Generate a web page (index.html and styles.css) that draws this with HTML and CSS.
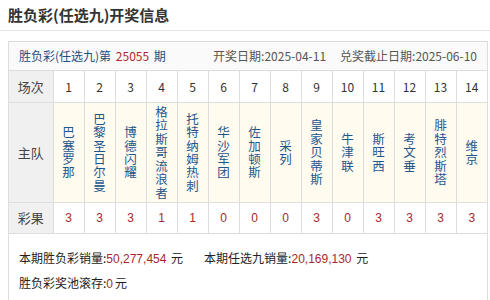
FILE: index.html
```html
<!DOCTYPE html>
<html lang="zh-CN">
<head>
<meta charset="utf-8">
<link rel="stylesheet" href="styles.css">
</head>
<body>
<div class="title">胜负彩(任选九)开奖信息</div>
<div class="box">
  <div class="box-head">
    <div class="issue">胜负彩(任选九)第 <span class="red">25055</span> 期</div>
    <div class="dates"><span>开奖日期:2025-04-11</span><span>兑奖截止日期:2025-06-10</span></div>
  </div>
  <table class="grid">
    <colgroup>
      <col class="c-label">
      <col><col><col><col><col><col><col><col><col><col><col><col><col><col>
    </colgroup>
    <tr class="r-num">
      <td class="label">场次</td>
      <td>1</td><td>2</td><td>3</td><td>4</td><td>5</td><td>6</td><td>7</td><td>8</td><td>9</td><td>10</td><td>11</td><td>12</td><td>13</td><td>14</td>
    </tr>
    <tr class="r-team">
      <td class="label">主队</td>
      <td><div class="vt">巴塞罗那</div></td>
      <td><div class="vt">巴黎圣日尔曼</div></td>
      <td><div class="vt">博德闪耀</div></td>
      <td><div class="vt">格拉斯哥流浪者</div></td>
      <td><div class="vt">托特纳姆热刺</div></td>
      <td><div class="vt">华沙军团</div></td>
      <td><div class="vt">佐加顿斯</div></td>
      <td><div class="vt">采列</div></td>
      <td><div class="vt">皇家贝蒂斯</div></td>
      <td><div class="vt">牛津联</div></td>
      <td><div class="vt">斯旺西</div></td>
      <td><div class="vt">考文垂</div></td>
      <td><div class="vt">腓特烈斯塔</div></td>
      <td><div class="vt">维京</div></td>
    </tr>
    <tr class="r-res">
      <td class="label">彩果</td>
      <td>3</td><td>3</td><td>3</td><td>1</td><td>1</td><td>0</td><td>0</td><td>0</td><td>3</td><td>0</td><td>3</td><td>3</td><td>3</td><td>3</td>
    </tr>
  </table>
  <div class="info">
    <p><span class="item">本期胜负彩销量:<span class="num">50,277,454</span> 元</span><span class="item">本期任选九销量:<span class="num">20,169,130</span> 元</span></p>
    <p>胜负彩奖池滚存:<span class="num">0</span>元</p>
  </div>
</div>
</body>
</html>
```

FILE: styles.css
```css
* { box-sizing: border-box; }
body {
  margin: 0;
  background: #fff;
  font-family: "Noto Sans CJK SC", "Liberation Sans", sans-serif;
  font-size: 12px;
  color: #333;
}
.title {
  height: 31px;
  line-height: 30px;
  padding-left: 8px;
  font-size: 15px;
  font-weight: bold;
  color: #333;
  border-bottom: 1px solid #e6e6e6;
}
.box {
  margin: 10px 0 0 8px;
  width: 480px;
  border: 1px solid #ddd;
  border-bottom: 0;
  height: 270px;
}
.box-head {
  height: 29px;
  line-height: 28px;
  background: #fafafa;
  border-bottom: 1px solid #ddd;
  display: flex;
  justify-content: space-between;
  padding: 0 10px;
}
.issue { color: #1d4f85; }
.issue .red { color: #b0262c; padding: 0 2px; }
.dates { color: #555; display: flex; gap: 14px; }
.grid {
  width: 478px;
  border-collapse: collapse;
  table-layout: fixed;
}
.grid col { width: 31px; }
.grid col.c-label { width: 44px; }
.grid td {
  border: 1px solid #ddd;
  text-align: center;
  vertical-align: middle;
  padding: 0;
}
.grid tr:first-child td { border-top: 0; }
.grid td:first-child { border-left: 0; }
.grid td:last-child { border-right: 0; }
.grid td.label {
  background: #f0f0f0;
  color: #444;
  font-size: 13px;
}
.r-num td { height: 31px; color: #333; }
.r-team td { height: 100px; background: #fffbef; }
.r-team td.label { background: #f0f0f0; }
.r-res td {
  height: 31px;
  color: #a8272d;
  font-family: "Liberation Sans", sans-serif;
  font-size: 12px;
}
.r-res td.label { font-family: "Noto Sans CJK SC", sans-serif; font-size: 13px; }
.vt {
  width: 13px;
  margin: 0 auto;
  line-height: 13.4px;
  font-size: 12.5px;
  color: #1f568c;
  word-break: break-all;
}
.info {
  padding: 12px 10px 0;
  color: #222;
}
.info p {
  margin: 0;
  line-height: 23px;
  font-size: 12px;
}
.info .item + .item { margin-left: 21px; }
.num {
  font-family: "Liberation Sans", sans-serif;
  color: #a8272d;
  margin-right: 2px;
}
```
